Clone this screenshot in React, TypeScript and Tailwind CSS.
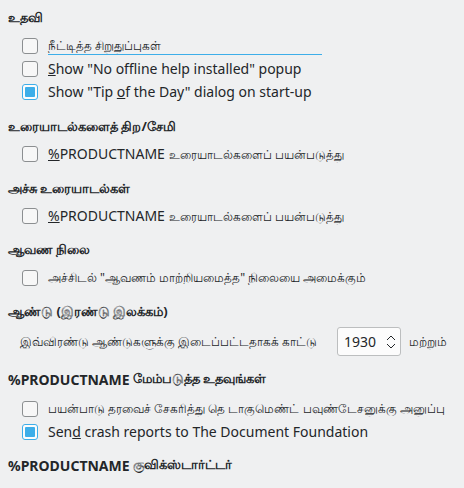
import React from "react";

const font = { fontFamily: '"Noto Sans", "Open Sans", sans-serif' };

function Box({ checked }: { checked?: boolean }) {
  if (checked) {
    return (
      <div className="w-4 h-4 shrink-0 rounded-[3px] border border-[#3daee9] bg-[#fcfcfc] flex items-center justify-center">
        <div className="w-[10px] h-[10px] rounded-[1px] bg-[#3daee9]" />
      </div>
    );
  }
  return <div className="w-4 h-4 shrink-0 rounded-[3px] border border-[#8c8f91] bg-[#f7f7f7]" />;
}

function Row({ checked, children, small, focus }: { checked?: boolean; children: React.ReactNode; small?: boolean; focus?: boolean }) {
  return (
    <div className="h-[23px] flex items-center pl-[22px]">
      <Box checked={checked} />
      <div className={"ml-[10px] relative whitespace-nowrap " + (small ? "text-[12px]" : "text-[14px]")}>
        {children}
        {focus && <div className="absolute left-0 top-[17px] w-[274px] h-px bg-[#3daee9]" />}
      </div>
    </div>
  );
}

function Heading({ children }: { children: React.ReactNode }) {
  return <div className="h-5 flex items-center pl-2 font-bold text-[13px] whitespace-nowrap">{children}</div>;
}

export default function App() {
  return (
    <div className="w-[464px] h-[488px] bg-[#eff0f1] text-[#232629] overflow-hidden pt-2" style={font}>
      <Heading>உதவி</Heading>
      <div className="mt-[6px]">
        <Row small focus>நீட்டித்த சிறுதுப்புகள்</Row>
        <Row><span className="underline">S</span>how "No offline help installed" popup</Row>
        <Row checked>Show "Tip <span className="underline">o</span>f the Day" dialog on start-up</Row>
      </div>

      <div className="mt-[14px]"><Heading>உரையாடல்களைத் திற/சேமி</Heading></div>
      <div className="mt-[5px]">
        <Row><span className="underline">%</span>PRODUCTNAME <span className="text-[12px]">உரையாடல்களைப் பயன்படுத்து</span></Row>
      </div>

      <div className="mt-[14px]"><Heading>அச்சு உரையாடல்கள்</Heading></div>
      <div className="mt-[5px]">
        <Row><span className="underline">%</span>PRODUCTNAME <span className="text-[12px]">உரையாடல்களைப் பயன்படுத்து</span></Row>
      </div>

      <div className="mt-[13px]"><Heading>ஆவண நிலை</Heading></div>
      <div className="mt-[6px]">
        <Row small>அச்சிடல் "ஆவணம் மாற்றியமைத்த" நிலையை அமைக்கும்</Row>
      </div>

      <div className="mt-[13px]"><Heading>ஆண்டு (இரண்டு இலக்கம்)</Heading></div>
      <div className="mt-[5px] h-[29px] flex items-center pl-[20px] whitespace-nowrap">
        <span className="text-[12px]">இவ்விரண்டு ஆண்டுகளுக்கு இடைப்பட்டதாகக் காட்டு</span>
        <div className="ml-auto w-[64px] h-[29px] rounded-[3px] border border-[#bcbebf] bg-[#fcfcfc] flex items-center pl-[6px] pr-[3px]">
          <span className="text-[14px]">1930</span>
          <svg className="ml-auto" width="12" height="18" viewBox="0 0 12 18" fill="none" stroke="#232629" strokeWidth="1">
            <path d="M2 7 L6 3 L10 7" />
            <path d="M2 11 L6 15 L10 11" />
          </svg>
        </div>
        <span className="ml-[8px] mr-[17px] text-[12px]">மற்றும்</span>
      </div>

      <div className="mt-[13px]"><Heading><span className="text-[14px]">%PRODUCTNAME</span>&nbsp;மேம்படுத்த உதவுங்கள்</Heading></div>
      <div className="mt-[8px]">
        <Row small>பயன்பாடு தரவைச் சேகரித்து தெ டாகுமெண்ட் பவுண்டேசனுக்கு அனுப்பு</Row>
        <Row checked>Sen<span className="underline">d</span> crash reports to The Document Foundation</Row>
      </div>

      <div className="mt-[12px]"><Heading><span className="text-[14px]">%PRODUCTNAME</span>&nbsp;குவிக்ஸ்டார்ட்டர்</Heading></div>
    </div>
  );
}
